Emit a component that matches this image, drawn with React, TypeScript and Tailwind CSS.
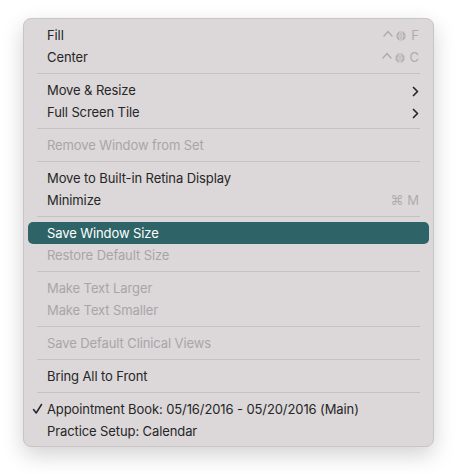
import React from "react";

type Item =
  | { sep: true }
  | {
      sep?: false;
      label: string;
      disabled?: boolean;
      highlight?: boolean;
      check?: boolean;
      shortcut?: React.ReactNode;
      sub?: boolean;
    };

const Globe = () => (
  <svg width="10" height="10" viewBox="0 0 10 10" className="inline-block">
    <circle cx="5" cy="5" r="4.7" fill="#b3aeb0" />
    <ellipse cx="5" cy="5" rx="1.8" ry="4.4" fill="none" stroke="#dcd7d9" strokeWidth="0.8" />
    <line x1="5" y1="0.6" x2="5" y2="9.4" stroke="#dcd7d9" strokeWidth="0.8" />
    <line x1="0.6" y1="5" x2="9.4" y2="5" stroke="#dcd7d9" strokeWidth="0.6" />
  </svg>
);

const Caret = () => (
  <svg width="10" height="7" viewBox="0 0 10 7">
    <path d="M1 6 L5 1.5 L9 6" fill="none" stroke="#b0abad" strokeWidth="1.4" strokeLinecap="round" strokeLinejoin="round" />
  </svg>
);

const FnShortcut = ({ k }: { k: string }) => (
  <span className="flex items-center gap-[3px] text-[#b0abad]">
    <span className="relative top-[-3px]">
      <Caret />
    </span>
    <Globe />
    <span className="ml-[2px]">{k}</span>
  </span>
);

const Chevron = () => (
  <svg width="7" height="11" viewBox="0 0 7 11">
    <path d="M1.5 1.5 L5.5 5.5 L1.5 9.5" fill="none" stroke="#262626" strokeWidth="1.7" strokeLinecap="round" strokeLinejoin="round" />
  </svg>
);

const items: Item[] = [
  { label: "Fill", shortcut: <FnShortcut k="F" /> },
  { label: "Center", shortcut: <FnShortcut k="C" /> },
  { sep: true },
  { label: "Move & Resize", sub: true },
  { label: "Full Screen Tile", sub: true },
  { sep: true },
  { label: "Remove Window from Set", disabled: true },
  { sep: true },
  { label: "Move to Built-in Retina Display" },
  { label: "Minimize", shortcut: <span className="text-[#b0abad]">⌘ M</span> },
  { sep: true },
  { label: "Save Window Size", highlight: true },
  { label: "Restore Default Size", disabled: true },
  { sep: true },
  { label: "Make Text Larger", disabled: true },
  { label: "Make Text Smaller", disabled: true },
  { sep: true },
  { label: "Save Default Clinical Views", disabled: true },
  { sep: true },
  { label: "Bring All to Front" },
  { sep: true },
  { label: "Appointment Book: 05/16/2016 - 05/20/2016 (Main)", check: true },
  { label: "Practice Setup: Calendar" },
];

export default function App() {
  return (
    <div
      className="w-[457px] h-[474px] bg-white pt-[18px] pl-[23px]"
      style={{ fontFamily: "Inter, 'Noto Sans', sans-serif" }}
    >
      <div className="w-[411px] rounded-[8px] bg-[#dcd7d9] border border-[#c9c4c6] shadow-[0_8px_22px_rgba(0,0,0,0.18)] px-[4px] pt-[5px] pb-[4px] text-[13px]">
        {items.map((it, i) =>
          it.sep ? (
            <div key={i} className="h-[11px] flex items-center px-[9px]">
              <div className="h-px w-full bg-[#c6c1c3]" />
            </div>
          ) : (
            <div
              key={i}
              className={`h-[22px] flex items-center pt-[2px] pl-[19px] pr-[10px] rounded-[5px] relative ${
                it.highlight ? "bg-[#2e6467] text-white" : it.disabled ? "text-[#a9a5a7]" : "text-[#262626]"
              }`}
            >
              {it.check && (
                <span className="absolute left-[4px] top-[5px]">
                  <svg width="11" height="12" viewBox="0 0 11 12">
                    <path d="M1.5 6.5 L4.2 10 L9.5 1.5" fill="none" stroke="#262626" strokeWidth="1.5" strokeLinecap="round" strokeLinejoin="round" />
                  </svg>
                </span>
              )}
              <span className="flex-1 tracking-[-0.1px]">{it.label}</span>
              {it.shortcut}
              {it.sub && <Chevron />}
            </div>
          )
        )}
      </div>
    </div>
  );
}
